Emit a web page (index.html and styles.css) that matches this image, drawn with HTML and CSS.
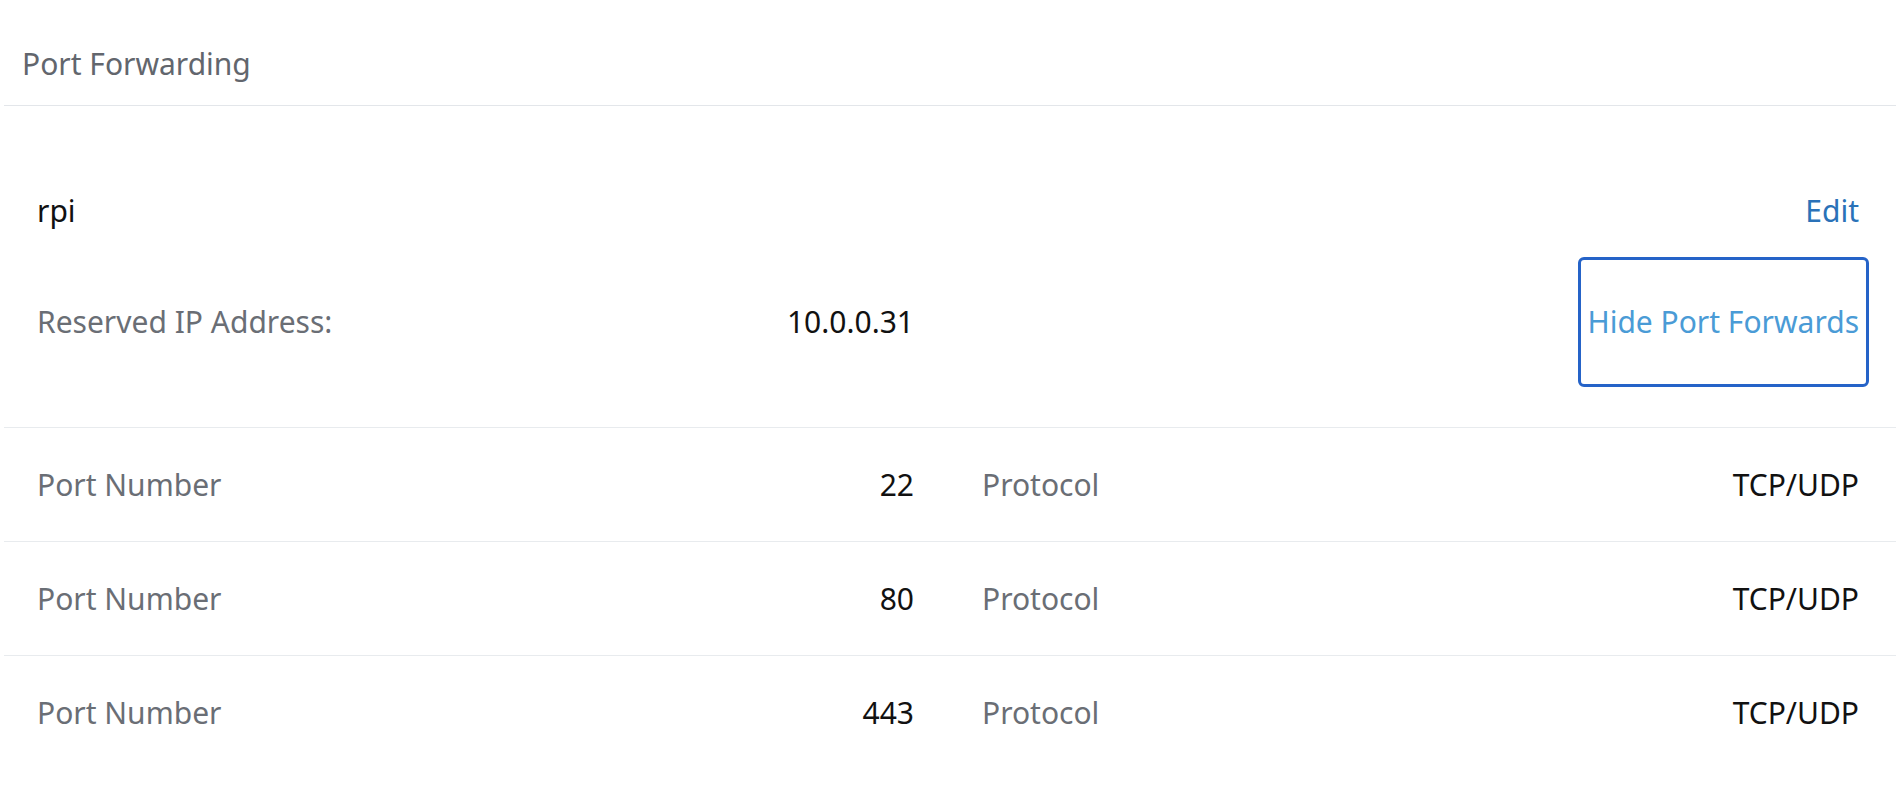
FILE: index.html
```html
<!DOCTYPE html>
<html lang="en">
<head>
    <meta charset="UTF-8">
    <meta name="viewport" content="width=device-width, initial-scale=1.0">
    <title>Port Forwarding</title>
    <link rel="stylesheet" href="styles.css">
</head>
<body>

    <div class="page">
        <h1 class="panel-head">Port Forwarding</h1>

        <div class="device">
            <div class="device-top">
                <span class="device-name">rpi</span>
                <a href="#" class="edit-link">Edit</a>
            </div>
            <div class="device-ip">
                <div class="pair">
                    <span class="label">Reserved IP Address:</span>
                    <span class="value">10.0.0.31</span>
                </div>
                <div class="toggle-cell">
                    <a href="#" class="toggle-btn">Hide Port Forwards</a>
                </div>
            </div>
        </div>

        <div class="port-row">
            <div class="pair">
                <span class="label">Port Number</span>
                <span class="value">22</span>
            </div>
            <div class="pair">
                <span class="label">Protocol</span>
                <span class="value">TCP/UDP</span>
            </div>
        </div>
        <div class="port-row">
            <div class="pair">
                <span class="label">Port Number</span>
                <span class="value">80</span>
            </div>
            <div class="pair">
                <span class="label">Protocol</span>
                <span class="value">TCP/UDP</span>
            </div>
        </div>
        <div class="port-row">
            <div class="pair">
                <span class="label">Port Number</span>
                <span class="value">443</span>
            </div>
            <div class="pair">
                <span class="label">Protocol</span>
                <span class="value">TCP/UDP</span>
            </div>
        </div>
    </div>

</body>
</html>
```

FILE: styles.css
```css
body{
    margin: 0;
    background-color: white;
    font-family: "Noto Sans", "Open Sans", sans-serif;
    font-size: 30px;
    line-height: 40px;
    color: #111;
}
a{
    text-decoration: none;
}

.page{
    padding-left: 4px;
}

.panel-head{
    margin: 0;
    padding: 44px 0 21px 18px;
    font-size: 30px;
    font-weight: normal;
    line-height: 40px;
    color: #62666d;
    border-bottom: 1px solid #e3e6ea;
}

.device{
    padding: 85px 37px 40px 33px;
    border-bottom: 1px solid #e8ebee;
}
.device-top{
    display: flex;
    justify-content: space-between;
    align-items: center;
}
.edit-link{
    color: #2a72b8;
}
.device-ip{
    display: grid;
    grid-template-columns: 1fr 1fr;
    column-gap: 68px;
    align-items: center;
    margin-top: 26px;
}
.toggle-cell{
    display: flex;
    justify-content: flex-end;
}
.toggle-btn{
    display: flex;
    align-items: center;
    height: 124px;
    padding: 0 7px 0 6px;
    margin-right: -10px;
    border: 3px solid #2563c8;
    border-radius: 6px;
    color: #4a9bd6;
}

.pair{
    display: flex;
    justify-content: space-between;
    align-items: center;
}
.label{
    color: #6a6e75;
}
.value{
    color: #111;
}

.port-row{
    display: grid;
    grid-template-columns: 1fr 1fr;
    column-gap: 68px;
    align-items: center;
    height: 113px;
    padding: 0 37px 0 33px;
    border-bottom: 1px solid #e8ebee;
}
.port-row:last-child{
    border-bottom: none;
}
```
